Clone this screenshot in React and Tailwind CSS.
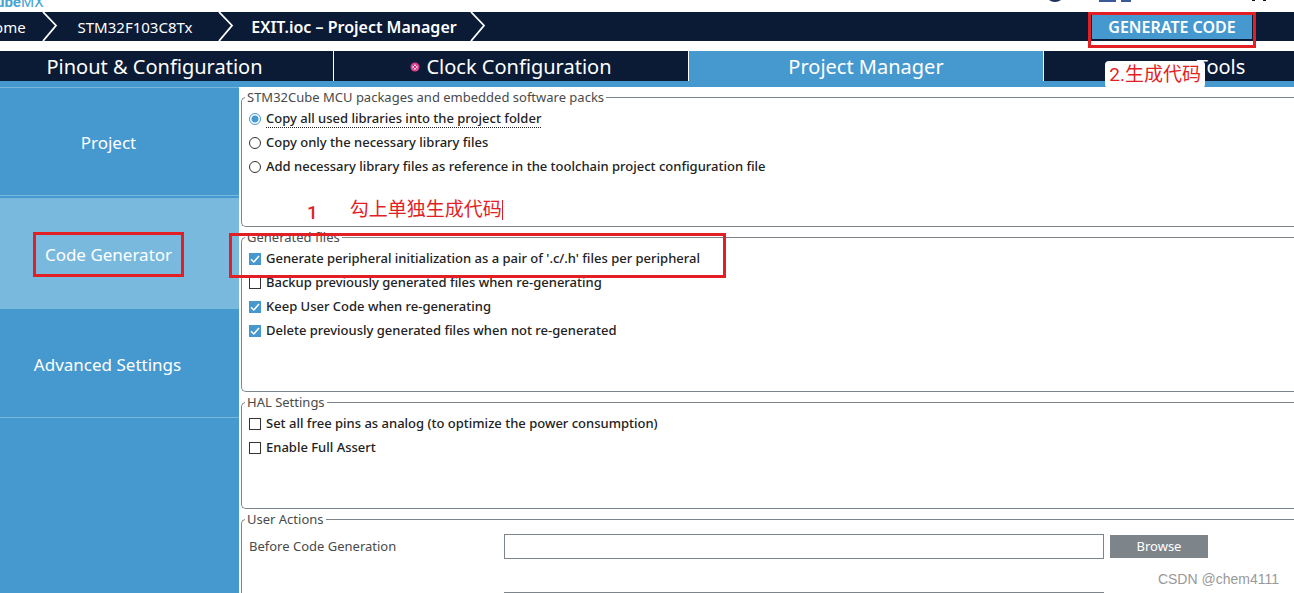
import { useState } from "react";

const tabs = [
  { name: "Pinout & Configuration", pad: "pr-6" },
  { name: "Clock Configuration", pad: "", alert: true },
  { name: "Project Manager", pad: "" },
  { name: "Tools", pad: "pl-[104px]" },
];

const packOptions = [
  "Copy all used libraries into the project folder",
  "Copy only the necessary library files",
  "Add necessary library files as reference in the toolchain project configuration file",
];

const fileOptions = [
  "Generate peripheral initialization as a pair of '.c/.h' files per peripheral",
  "Backup previously generated files when re-generating",
  "Keep User Code when re-generating",
  "Delete previously generated files when not re-generated",
];

const halOptions = [
  "Set all free pins as analog (to optimize the power consumption)",
  "Enable Full Assert",
];

function Chevron() {
  return (
    <svg width="16" height="29" viewBox="0 0 16 29" fill="none" className="shrink-0">
      <path d="M1 0 L14 13.5 L1 29" stroke="white" strokeWidth="1.8" />
    </svg>
  );
}

function Group({ title, className, children }) {
  return (
    <fieldset
      className={`min-w-0 rounded-l-[5px] border border-r-0 border-[#7d858b] pl-[7px] ${className}`}
    >
      <legend className="-ml-1 px-0.5 leading-5 text-[#4a4a4a]">{title}</legend>
      {children}
    </fieldset>
  );
}

function CheckRow({ label, checked, onChange }) {
  return (
    <label className="flex h-6 items-center gap-[5px] font-medium">
      <span className="grid shrink-0">
        <input
          type="checkbox"
          checked={checked}
          onChange={onChange}
          className="col-start-1 row-start-1 h-3 w-3 appearance-none border border-[#333] bg-white checked:border-[#4699cf] checked:bg-[#4699cf]"
        />
        {checked && (
          <svg width="12" height="12" viewBox="0 0 12 12" fill="none" className="pointer-events-none col-start-1 row-start-1">
            <path d="M2 6.2 L4.8 9 L10 3" stroke="white" strokeWidth="1.5" />
          </svg>
        )}
      </span>
      {label}
    </label>
  );
}

function CheckList({ items, initial }) {
  const [values, setValues] = useState(initial);
  const toggle = (i) => setValues(values.map((v, n) => (n === i ? !v : v)));

  return items.map((label, i) => (
    <CheckRow key={label} label={label} checked={values[i]} onChange={() => toggle(i)} />
  ));
}

function Header() {
  return (
    <header>
      <div className="flex h-3 items-end justify-between overflow-hidden">
        <div className="-ml-1 h-[18px] text-[15px] leading-4 font-bold text-[#4ba3d3] font-['Roboto',sans-serif]">
          ube<span className="font-normal">MX</span>
        </div>
        <svg width="260" height="12" viewBox="0 0 260 12">
          <circle cx="21" cy="-8" r="10" fill="#1d2f5f" />
          <path d="M65 0h17v2h-17z M87 0h10v2h-10z" fill="#3b5998" />
          <path d="M218 0h3v1h-3z M229 0h3v1h-3z" fill="#111" />
        </svg>
      </div>
      <nav className="flex h-[29px] items-center bg-[#0b1b36] text-base text-white">
        <a href="#home" className="w-[42px] shrink-0">
          <span className="-ml-[17px] text-[15px]">Home</span>
        </a>
        <Chevron />
        <a href="#mcu" className="w-40 shrink-0 pr-1.5 text-center text-[15px] leading-6">STM32F103C8Tx</a>
        <Chevron />
        <a href="#project" className="w-[236px] shrink-0 pl-1 text-center font-semibold">
          EXIT.ioc – Project Manager
        </a>
        <Chevron />
        <div className="relative mr-[42px] ml-auto">
          <button className="block h-[25px] w-40 bg-[#4699cf] font-semibold">GENERATE CODE</button>
          <div className="pointer-events-none absolute -inset-x-1 -top-0.5 h-9 border-3 border-[#e31f26]" />
        </div>
      </nav>
    </header>
  );
}

function Tabs() {
  const [active, setActive] = useState("Project Manager");

  return (
    <div className="relative mt-2.5 border-b-[6px] border-[#4699cf]">
      <div className="grid grid-cols-[334fr_355fr_355fr_250fr] text-xl text-white">
        {tabs.map((tab) => (
          <button
            key={tab.name}
            onClick={() => setActive(tab.name)}
            className={`flex h-[30px] items-center justify-center gap-1.5 border-r border-white pt-0.5 last:border-r-0 ${tab.pad} ${
              active === tab.name ? "bg-[#4699cf]" : "bg-[#0b1b36]"
            }`}
          >
            {tab.alert && (
              <svg width="10" height="10" viewBox="0 0 10 10">
                <circle cx="5" cy="5" r="4.5" fill="#d6408c" />
                <circle cx="5" cy="5" r="2.6" fill="#f6c6dd" />
                <path d="M3 3 L7 7 M7 3 L3 7" stroke="#c9307c" strokeWidth="1" />
              </svg>
            )}
            {tab.name}
          </button>
        ))}
      </div>
      <div className="absolute top-2.5 right-[89px] rounded bg-white px-1 text-[19px] leading-[27px] text-[#e31f26] font-['Roboto','Noto_Sans_CJK_SC',sans-serif]">
        2.生成代码
      </div>
    </div>
  );
}

function Sidebar() {
  return (
    <aside className="w-[239px] shrink-0 bg-[#4699cf] text-[17px] text-white">
      <button className="block h-[109px] w-full border-y border-[#7ab9de] pt-0.5 pr-[22px]">Project</button>
      <button className="mt-0.5 flex h-[111px] w-full items-center justify-center bg-[#7ab9de] pt-0.5 pr-[22px]">
        <span className="relative">
          Code Generator
          <span className="pointer-events-none absolute -inset-x-3 -inset-y-2.5 border-3 border-[#e31f26]" />
        </span>
      </button>
      <button className="block h-[109px] w-full border-b border-[#7ab9de] pt-1 pr-6">Advanced Settings</button>
    </aside>
  );
}

function ActionRow({ label, name }) {
  return (
    <div className="flex items-center gap-1.5">
      <label htmlFor={name} className="w-[249px] shrink-0 text-[#4a4a4a]">{label}</label>
      <input id={name} className="h-[25px] min-w-0 flex-1 border border-[#7d858b] bg-white px-1" />
      <button className="h-[23px] w-[98px] bg-[#7d858b] text-white">Browse</button>
    </div>
  );
}

export default function App() {
  const [pack, setPack] = useState(0);

  return (
    <div className="relative flex h-screen flex-col overflow-hidden bg-white font-['Noto_Sans','Noto_Sans_CJK_SC',sans-serif]">
      <Header />
      <Tabs />
      <div className="flex min-h-0 flex-1">
        <Sidebar />
        <main className="min-w-0 flex-1 pl-0.5 text-[13px] text-[#222]">
          <div className="relative">
            <Group title="STM32Cube MCU packages and embedded software packs" className="pb-[47px]">
              {packOptions.map((label, i) => (
                <label key={label} className="flex h-6 items-center gap-[5px] font-medium">
                  <input
                    type="radio"
                    name="pack"
                    checked={pack === i}
                    onChange={() => setPack(i)}
                    className="h-3 w-3 appearance-none rounded-full border border-[#333] bg-white checked:border-[#4699cf] checked:bg-[radial-gradient(circle,#4699cf_3px,white_4px)]"
                  />
                  <span className={`border-b border-dotted leading-[17px] ${pack === i ? "border-[#222]" : "border-transparent"}`}>
                    {label}
                  </span>
                </label>
              ))}
            </Group>
            <div className="absolute bottom-0 left-[66px] flex items-center gap-8 text-[19px] leading-7 text-[#e31f26] font-['Roboto','Noto_Sans_CJK_SC',sans-serif]">
              <span className="pt-1.5 font-medium">1</span>
              <span className="border-r border-[#e31f26] leading-5">勾上单独生成代码</span>
            </div>
          </div>
          <div className="relative">
            <Group title="Generated files" className="pb-12">
              <CheckList items={fileOptions} initial={[true, false, true, true]} />
            </Group>
            <div className="pointer-events-none absolute top-1.5 -left-3 h-[45px] w-[497px] border-3 border-[#e31f26]" />
          </div>
          <Group title="HAL Settings" className="pb-12">
            <CheckList items={halOptions} initial={[false, false]} />
          </Group>
          <Group title="User Actions" className="pr-[86px]">
            <div className="flex flex-col gap-[33px] pt-[5px]">
              <ActionRow label="Before Code Generation" name="before" />
              <ActionRow label="After Code Generation" name="after" />
            </div>
          </Group>
        </main>
      </div>
      <div className="absolute right-[15px] bottom-1.5 text-sm leading-4 text-[#999] font-['Liberation_Sans',sans-serif]">
        CSDN @chem4111
      </div>
    </div>
  );
}
